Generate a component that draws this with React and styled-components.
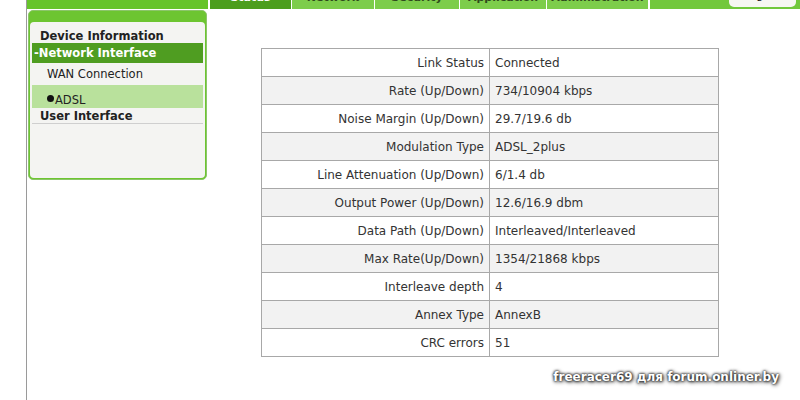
import styled, { createGlobalStyle } from 'styled-components';

const GlobalStyle = createGlobalStyle`
    html, body {
        margin: 0;
        padding: 0;
        background: #ffffff;
    }
    body {
        font-family: "DejaVu Sans", Verdana, sans-serif;
        color: #333;
    }
`;

const Page = styled.div`
    position: relative;
    width: 774px;
    height: 400px;
    margin-left: 26px;
    border-left: 1px solid #9a9a9a;
    overflow: hidden;
`;

const TopBar = styled.div`
    display: flex;
    height: 28px;
    margin-top: -19px;
`;

const TopStrip = styled.div`
    width: 181px;
    background: #66c42b;
    margin-right: 1px;
`;

const Tab = styled.div`
    width: ${(p) => p.w}px;
    display: flex;
    align-items: flex-end;
    justify-content: center;
    padding-bottom: 5px;
    box-sizing: border-box;
    margin-left: 1px;
    font-size: 11px;
    font-weight: bold;
    white-space: nowrap;
    overflow: hidden;
    background: ${(p) => (p.active ? '#4c9e1d' : '#7dcd4b')};
    color: ${(p) => (p.active ? '#ffffff' : '#2f4a1c')};
`;

const TabFiller = styled.div`
    flex: 1;
    margin-left: 2px;
    background: #72c83c;
    display: flex;
    justify-content: flex-end;
    padding-right: 5px;
`;

const LogoutButton = styled.div`
    width: 67px;
    height: 26px;
    background: #f7f7f2;
    border-radius: 0 0 5px 5px;
    display: flex;
    align-items: flex-end;
    justify-content: center;
    padding-bottom: 5px;
    box-sizing: border-box;
    font-size: 11px;
    color: #222;
`;

const Content = styled.div`
    display: flex;
    align-items: flex-start;
    margin-top: 1px;
`;

const Sidebar = styled.div`
    width: 179px;
    height: 170px;
    margin-left: 1px;
    box-sizing: border-box;
    background: #6dc531;
    border: 1px solid #8cc56a;
    border-radius: 5px;
    padding: 11px 1px 1px;
    display: flex;
`;

const SideBody = styled.div`
    flex: 1;
    background: #f4f4f2;
    border-radius: 4px;
    padding: 6px 2px 0;
    display: flex;
    flex-direction: column;
`;

const MenuItem = styled.div`
    height: ${(p) => p.h || 15}px;
    display: flex;
    align-items: ${(p) => p.align || 'center'};
    padding-left: ${(p) => p.indent}px;
    font-size: 11.5px;
    font-weight: ${(p) => (p.bold ? 'bold' : 'normal')};
    background: ${(p) => p.bg || 'transparent'};
    color: ${(p) => p.color || '#222'};
    border-bottom: ${(p) => (p.rule ? '1px solid #cfcfcf' : 'none')};
    box-sizing: border-box;
    padding-bottom: ${(p) => p.pb || 0}px;
`;

const Bullet = styled.span`
    display: inline-block;
    width: 7px;
    height: 7px;
    border-radius: 50%;
    background: #111;
    margin-right: 1px;
    margin-bottom: 5px;
`;

const Main = styled.div`
    margin-left: 54px;
    margin-top: 38px;
`;

const InfoTable = styled.table`
    width: 458px;
    border-collapse: collapse;
    font-size: 12px;
    color: #333;
`;

const Row = styled.tr`
    height: 28px;
    background: ${(p) => (p.shade ? '#f2f2f2' : '#ffffff')};
`;

const Label = styled.td`
    width: 222px;
    border: 1px solid #a8a8a8;
    text-align: right;
    padding: 0 5px 0 0;
    white-space: nowrap;
`;

const Value = styled.td`
    border: 1px solid #a8a8a8;
    text-align: left;
    padding: 0 0 0 5px;
`;

const Watermark = styled.div`
    position: absolute;
    right: 22px;
    bottom: 16px;
    font-size: 12px;
    font-weight: bold;
    color: #ffffff;
    text-shadow: 0 0 2px #222, 0 0 3px #333, 1px 1px 4px #000;
`;

const rows = [
    ['Link Status', 'Connected'],
    ['Rate (Up/Down)', '734/10904 kbps'],
    ['Noise Margin (Up/Down)', '29.7/19.6 db'],
    ['Modulation Type', 'ADSL_2plus'],
    ['Line Attenuation (Up/Down)', '6/1.4 db'],
    ['Output Power (Up/Down)', '12.6/16.9 dbm'],
    ['Data Path (Up/Down)', 'Interleaved/Interleaved'],
    ['Max Rate(Up/Down)', '1354/21868 kbps'],
    ['Interleave depth', '4'],
    ['Annex Type', 'AnnexB'],
    ['CRC errors', '51'],
];

const tabs = [
    { name: 'Status', w: 81, active: true },
    { name: 'Network', w: 82 },
    { name: 'Security', w: 84 },
    { name: 'Application', w: 86 },
    { name: 'Administration', w: 101 },
];

export default function App() {
    return (
        <>
            <GlobalStyle />
            <Page>
                <TopBar>
                    <TopStrip />
                    {tabs.map((t) => (
                        <Tab key={t.name} w={t.w} active={t.active}>
                            {t.name}
                        </Tab>
                    ))}
                    <TabFiller>
                        <LogoutButton>Logout</LogoutButton>
                    </TabFiller>
                </TopBar>

                <Content>
                    <Sidebar>
                        <SideBody>
                            <MenuItem bold indent={8} h={15}>Device Information</MenuItem>
                            <MenuItem bold indent={2} h={20} bg="#4f9d21" color="#ffffff">
                                -Network Interface
                            </MenuItem>
                            <MenuItem indent={15} h={22}>WAN Connection</MenuItem>
                            <MenuItem indent={15} h={23} bg="#b9e19c" align="flex-end" pb={1}>
                                <Bullet />ADSL
                            </MenuItem>
                            <MenuItem bold indent={8} h={16} rule>User Interface</MenuItem>
                        </SideBody>
                    </Sidebar>

                    <Main>
                        <InfoTable>
                            <tbody>
                                {rows.map(([label, value], i) => (
                                    <Row key={label} shade={i % 2 === 1}>
                                        <Label>{label}</Label>
                                        <Value>{value}</Value>
                                    </Row>
                                ))}
                            </tbody>
                        </InfoTable>
                    </Main>
                </Content>

                <Watermark>freeracer69 для forum.onliner.by</Watermark>
            </Page>
        </>
    );
}
